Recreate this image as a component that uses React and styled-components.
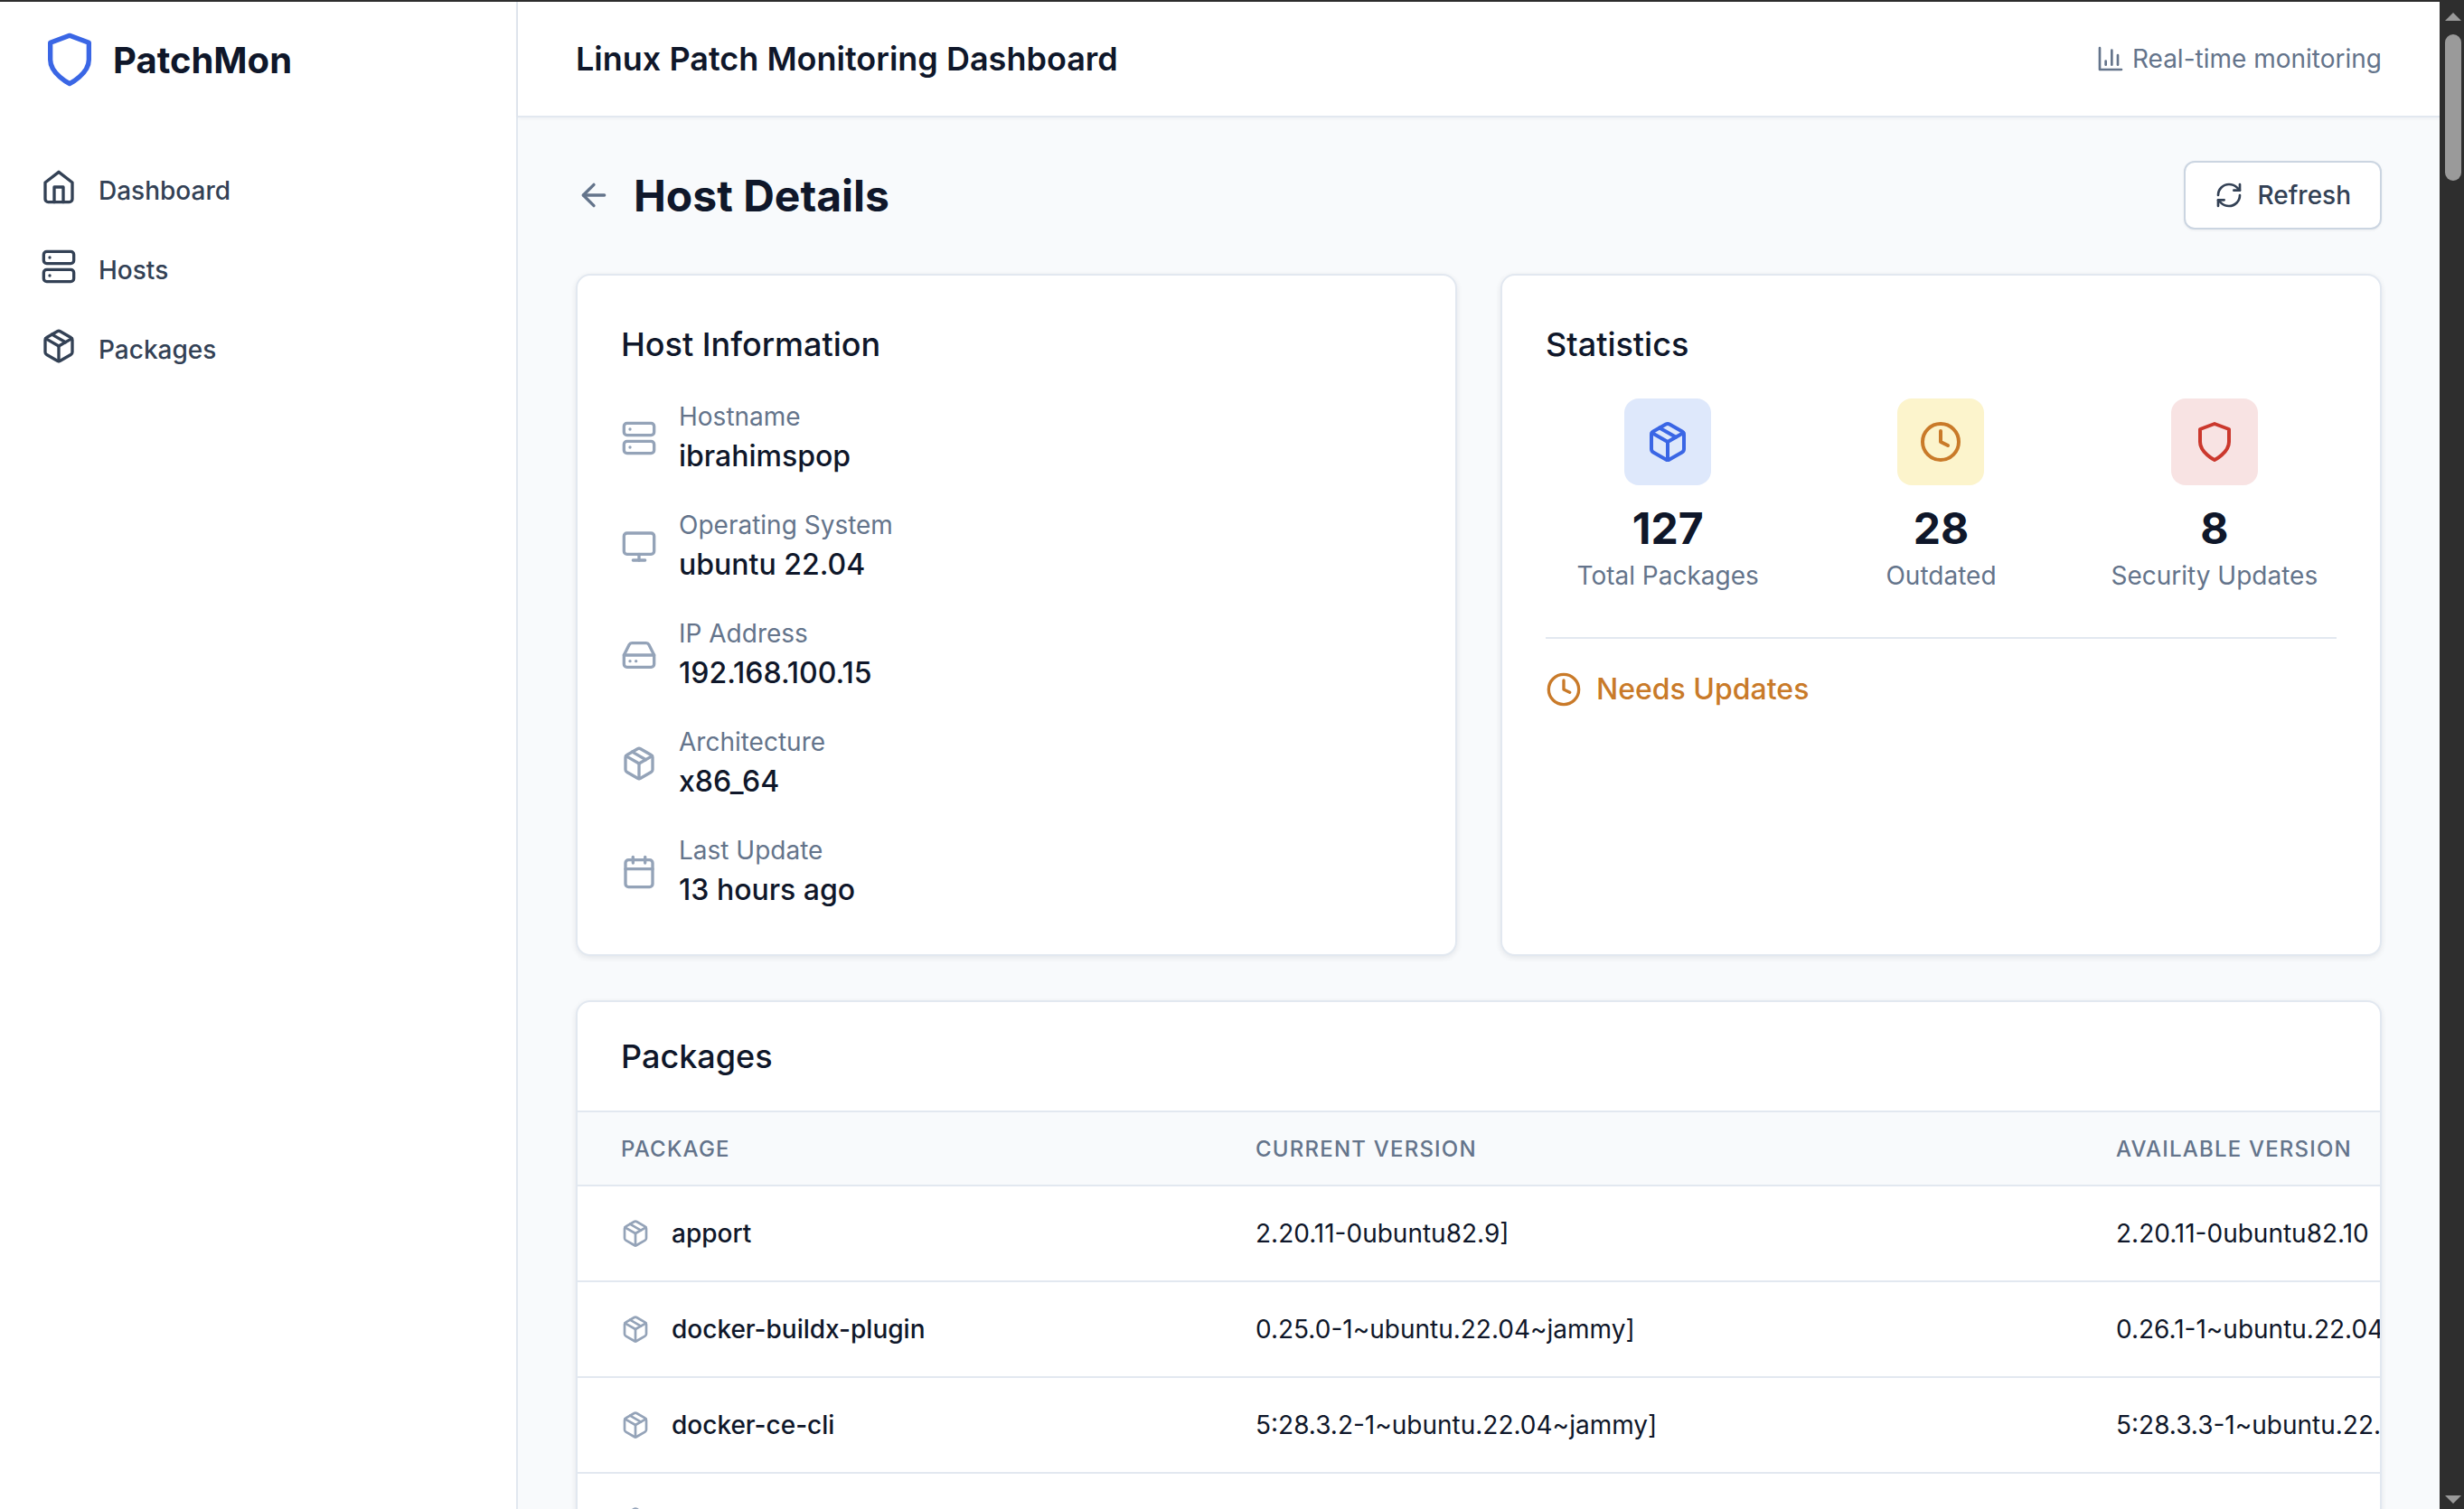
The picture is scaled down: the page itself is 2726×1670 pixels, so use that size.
import React from 'react';
import styled, { createGlobalStyle } from 'styled-components';
import { ArrowLeft, Calendar, Clock, HardDrive, Monitor, Package, RefreshCw, Server } from 'lucide-react';

const TONES = {
  blue: { bg: '#dee8fb', fg: '#3a66e5' },
  amber: { bg: '#fcf4cc', fg: '#c97a29' },
  red: { bg: '#f8e3e3', fg: '#cb382d' },
};

const HOST_INFO = [
  { icon: Server, label: 'Hostname', value: 'ibrahimspop' },
  { icon: Monitor, label: 'Operating System', value: 'ubuntu 22.04' },
  { icon: HardDrive, label: 'IP Address', value: '192.168.100.15' },
  { icon: Package, label: 'Architecture', value: 'x86_64' },
  { icon: Calendar, label: 'Last Update', value: '13 hours ago' },
];

const PACKAGES = [
  { name: 'apport', current: '2.20.11-0ubuntu82.9]', available: '2.20.11-0ubuntu82.10' },
  { name: 'docker-buildx-plugin', current: '0.25.0-1~ubuntu.22.04~jammy]', available: '0.26.1-1~ubuntu.22.04~jammy' },
  { name: 'docker-ce-cli', current: '5:28.3.2-1~ubuntu.22.04~jammy]', available: '5:28.3.3-1~ubuntu.22.04~jammy' },
  { name: 'docker-ce', current: '5:28.3.2-1~ubuntu.22.04~jammy]', available: '5:28.3.3-1~ubuntu.22.04~jammy' },
];

const ShieldIcon = ({ size = 24, color = 'currentColor' }) => (
  <svg width={size} height={size} viewBox="0 0 24 24" fill="none" stroke={color} strokeWidth="2" strokeLinecap="round" strokeLinejoin="round">
    <path d="M12 22s8-4 8-10V5l-8-3-8 3v7c0 6 8 10 8 10z" />
  </svg>
);

const HomeIcon = ({ size = 24 }) => (
  <svg width={size} height={size} viewBox="0 0 24 24" fill="none" stroke="currentColor" strokeWidth="2" strokeLinecap="round" strokeLinejoin="round">
    <path d="M3 9l9-7 9 7v11a2 2 0 0 1-2 2H5a2 2 0 0 1-2-2z" />
    <polyline points="9 22 9 12 15 12 15 22" />
  </svg>
);

const ChartIcon = ({ size = 24 }) => (
  <svg width={size} height={size} viewBox="0 0 24 24" fill="none" stroke="currentColor" strokeWidth="2" strokeLinecap="round" strokeLinejoin="round">
    <path d="M3 3v18h18" />
    <path d="M18 17V9" />
    <path d="M13 17V5" />
    <path d="M8 17v-3" />
  </svg>
);

const NAV = [
  { icon: HomeIcon, label: 'Dashboard' },
  { icon: Server, label: 'Hosts' },
  { icon: Package, label: 'Packages' },
];

const App = () => (
  <>
    <GlobalStyle />
    <Frame>
      <TopEdge />
      <Window>
        <Sidebar>
          <Brand>
            <ShieldIcon size={64} color={TONES.blue.fg} />
            <BrandName>PatchMon</BrandName>
          </Brand>
          <Nav>
            {NAV.map(({ icon: Icon, label }) => (
              <NavItem key={label}>
                <NavIcon><Icon size={40} /></NavIcon>
                {label}
              </NavItem>
            ))}
          </Nav>
        </Sidebar>
        <Main>
          <TopBar>
            <TopTitle>Linux Patch Monitoring Dashboard</TopTitle>
            <Realtime><ChartIcon size={32} />Real-time monitoring</Realtime>
          </TopBar>
          <Content>
            <PageHead>
              <PageTitleRow>
                <BackButton><ArrowLeft size={40} /></BackButton>
                <PageTitle>Host Details</PageTitle>
              </PageTitleRow>
              <RefreshButton><RefreshCw size={32} />Refresh</RefreshButton>
            </PageHead>
            <CardGrid>
              <Card>
                <CardTitle>Host Information</CardTitle>
                <InfoList>
                  {HOST_INFO.map(({ icon: Icon, label, value }) => (
                    <InfoRow key={label}>
                      <InfoIcon><Icon size={40} /></InfoIcon>
                      <div>
                        <InfoLabel>{label}</InfoLabel>
                        <InfoValue>{value}</InfoValue>
                      </div>
                    </InfoRow>
                  ))}
                </InfoList>
              </Card>
              <Card>
                <CardTitle>Statistics</CardTitle>
                <StatGrid>
                  <Stat>
                    <StatBadge $tone="blue"><Package size={48} /></StatBadge>
                    <StatNumber>127</StatNumber>
                    <StatLabel>Total Packages</StatLabel>
                  </Stat>
                  <Stat>
                    <StatBadge $tone="amber"><Clock size={48} /></StatBadge>
                    <StatNumber>28</StatNumber>
                    <StatLabel>Outdated</StatLabel>
                  </Stat>
                  <Stat>
                    <StatBadge $tone="red"><ShieldIcon size={48} /></StatBadge>
                    <StatNumber>8</StatNumber>
                    <StatLabel>Security Updates</StatLabel>
                  </Stat>
                </StatGrid>
                <StatusRow><Clock size={40} />Needs Updates</StatusRow>
              </Card>
            </CardGrid>
            <TableCard>
              <TableTitle>Packages</TableTitle>
              <Table>
                <colgroup>
                  <col width="702" />
                  <col width="952" />
                  <col width="700" />
                </colgroup>
                <thead>
                  <tr>
                    <Th>Package</Th>
                    <Th>Current Version</Th>
                    <Th>Available Version</Th>
                  </tr>
                </thead>
                <tbody>
                  {PACKAGES.map((pkg) => (
                    <tr key={pkg.name}>
                      <Td>
                        <PackageName>
                          <PackageIcon><Package size={32} /></PackageIcon>
                          {pkg.name}
                        </PackageName>
                      </Td>
                      <Td $plain>{pkg.current}</Td>
                      <Td $plain>{pkg.available}</Td>
                    </tr>
                  ))}
                </tbody>
              </Table>
            </TableCard>
          </Content>
        </Main>
        <Scrollbar>
          <ArrowUp />
          <Thumb />
          <ArrowDown />
        </Scrollbar>
      </Window>
    </Frame>
  </>
);

const GlobalStyle = createGlobalStyle`
  html, body {
    margin: 0;
    height: 100%;
    overflow: hidden;
  }
  body {
    font-family: Inter, "Liberation Sans", sans-serif;
    color: #0f172a;
    background: #f8fafc;
  }
`;

const Frame = styled.div`
  height: 1670px;
  display: flex;
  flex-direction: column;
  overflow: hidden;
`;

const TopEdge = styled.div`
  height: 2px;
  flex: none;
  background: #2e2e2e;
`;

const Window = styled.div`
  flex: 1;
  min-height: 0;
  display: flex;
`;

const Sidebar = styled.aside`
  width: 573px;
  flex: none;
  box-sizing: border-box;
  background: #fff;
  border-right: 2px solid #e2e8f0;
`;

const Brand = styled.div`
  height: 128px;
  box-sizing: border-box;
  padding-left: 45px;
  display: flex;
  align-items: center;
  gap: 16px;
`;

const BrandName = styled.span`
  font-size: 40px;
  font-weight: 700;
`;

const Nav = styled.nav`
  padding: 45px 0 0 45px;
  display: flex;
  flex-direction: column;
  gap: 16px;
`;

const NavItem = styled.a`
  height: 72px;
  display: flex;
  align-items: center;
  gap: 24px;
  font-size: 28px;
  font-weight: 500;
  color: #334155;
`;

const NavIcon = styled.span`
  display: flex;
  margin-bottom: 8px;
`;

const Main = styled.main`
  flex: 1;
  min-width: 0;
  display: flex;
  flex-direction: column;
`;

const TopBar = styled.header`
  height: 128px;
  flex: none;
  box-sizing: border-box;
  padding: 0 64px 0 64px;
  display: flex;
  align-items: center;
  justify-content: space-between;
  background: #fff;
  border-bottom: 2px solid #e2e8f0;
  box-shadow: 0 1px 4px rgba(15, 23, 42, 0.05);
`;

const TopTitle = styled.h1`
  margin: 0;
  font-size: 36px;
  font-weight: 600;
`;

const Realtime = styled.div`
  display: flex;
  align-items: center;
  gap: 8px;
  font-size: 28px;
  color: #64748b;
`;

const Content = styled.div`
  flex: 1;
  min-height: 0;
  padding: 48px 64px 0 64px;
  display: flex;
  flex-direction: column;
  gap: 49px;
`;

const PageHead = styled.div`
  display: flex;
  align-items: center;
  justify-content: space-between;
`;

const PageTitleRow = styled.div`
  display: flex;
  align-items: center;
  gap: 24px;
`;

const BackButton = styled.span`
  display: flex;
  color: #64748b;
`;

const PageTitle = styled.h2`
  margin: 0;
  font-size: 48px;
  font-weight: 700;
`;

const RefreshButton = styled.button`
  height: 76px;
  box-sizing: border-box;
  padding: 0 32px;
  display: flex;
  align-items: center;
  gap: 16px;
  font: 500 28px Inter, sans-serif;
  color: #334155;
  background: #fff;
  border: 2px solid #cbd5e1;
  border-radius: 12px;
  box-shadow: 0 1px 3px rgba(15, 23, 42, 0.06);
`;

const CardGrid = styled.div`
  display: grid;
  grid-template-columns: 1fr 1fr;
  gap: 48px;
`;

const Card = styled.section`
  height: 755px;
  box-sizing: border-box;
  padding: 48px;
  background: #fff;
  border: 2px solid #e2e8f0;
  border-radius: 16px;
  box-shadow: 0 2px 6px rgba(15, 23, 42, 0.09);
`;

const CardTitle = styled.h3`
  margin: 0 0 32px;
  font-size: 36px;
  line-height: 56px;
  font-weight: 500;
`;

const InfoList = styled.div`
  display: flex;
  flex-direction: column;
  gap: 32px;
`;

const InfoRow = styled.div`
  display: flex;
  align-items: center;
  gap: 24px;
`;

const InfoIcon = styled.span`
  display: flex;
  color: #94a3b8;
`;

const InfoLabel = styled.div`
  font-size: 28px;
  line-height: 40px;
  color: #64748b;
`;

const InfoValue = styled.div`
  font-size: 32px;
  line-height: 48px;
  font-weight: 500;
`;

const StatGrid = styled.div`
  display: grid;
  grid-template-columns: repeat(3, 1fr);
  gap: 32px;
  padding-bottom: 48px;
  border-bottom: 2px solid #e2e8f0;
`;

const Stat = styled.div`
  display: flex;
  flex-direction: column;
  align-items: center;
`;

const StatBadge = styled.div`
  width: 96px;
  height: 96px;
  margin-bottom: 16px;
  display: flex;
  align-items: center;
  justify-content: center;
  border-radius: 16px;
  color: ${({ $tone }) => TONES[$tone].fg};
  background: ${({ $tone }) => TONES[$tone].bg};
`;

const StatNumber = styled.div`
  font-size: 48px;
  line-height: 64px;
  font-weight: 700;
`;

const StatLabel = styled.div`
  font-size: 28px;
  line-height: 40px;
  color: #64748b;
`;

const StatusRow = styled.div`
  margin-top: 32px;
  display: flex;
  align-items: center;
  gap: 16px;
  font-size: 32px;
  line-height: 48px;
  font-weight: 500;
  color: ${TONES.amber.fg};
`;

const TableCard = styled.section`
  flex: none;
  overflow: hidden;
  background: #fff;
  border: 2px solid #e2e8f0;
  border-radius: 16px;
  box-shadow: 0 2px 6px rgba(15, 23, 42, 0.09);
`;

const TableTitle = styled.h3`
  margin: 0;
  padding: 32px 48px;
  font-size: 36px;
  line-height: 56px;
  font-weight: 500;
`;

const Table = styled.table`
  width: 2354px;
  table-layout: fixed;
  border-collapse: collapse;
`;

const Th = styled.th`
  height: 80px;
  padding: 0 0 0 48px;
  text-align: left;
  font-size: 24px;
  font-weight: 500;
  letter-spacing: 1.2px;
  text-transform: uppercase;
  white-space: nowrap;
  color: #64748b;
  background: #f8fafc;
  border-top: 2px solid #e2e8f0;
  border-bottom: 2px solid #e2e8f0;
`;

const Td = styled.td`
  height: 104px;
  padding: 0 0 0 48px;
  font-size: 28px;
  font-weight: ${({ $plain }) => ($plain ? 400 : 500)};
  white-space: nowrap;
  border-bottom: 2px solid #e2e8f0;
`;

const PackageName = styled.div`
  display: flex;
  align-items: center;
  gap: 24px;
`;

const PackageIcon = styled.span`
  display: flex;
  color: #94a3b8;
`;

const Scrollbar = styled.div`
  width: 27px;
  flex: none;
  box-sizing: border-box;
  padding: 12px 0 6px 6px;
  display: flex;
  flex-direction: column;
  background: #2e2e2e;
`;

const ArrowUp = styled.div`
  width: 0;
  height: 0;
  border-left: 9px solid transparent;
  border-right: 9px solid transparent;
  border-bottom: 9px solid #9a9a9a;
`;

const Thumb = styled.div`
  width: 18px;
  height: 162px;
  margin-top: 15px;
  border-radius: 9px;
  background: #9a9a9a;
`;

const ArrowDown = styled.div`
  width: 0;
  height: 0;
  margin-top: auto;
  border-left: 9px solid transparent;
  border-right: 9px solid transparent;
  border-top: 9px solid #9a9a9a;
`;

export default App;
